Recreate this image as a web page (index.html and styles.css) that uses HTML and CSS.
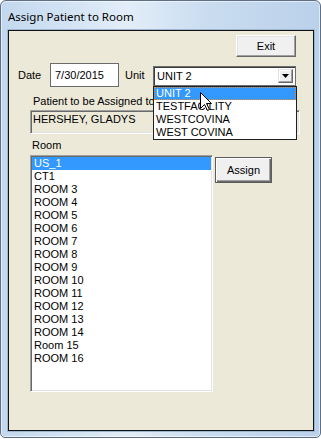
FILE: index.html
```html
<!DOCTYPE html>
<html>
<head>
<meta charset="utf-8">
<link rel="stylesheet" href="styles.css">
</head>
<body>
<div class="window">
  <div class="titlebar">Assign Patient to Room</div>
  <div class="client">
    <div class="toprow"><div class="btn exit">Exit</div></div>
    <div class="daterow">
      <span class="lbl date-lbl">Date</span>
      <div class="datebox">7/30/2015</div>
      <span class="lbl unit-lbl">Unit</span>
      <div class="combo">
        <span class="combo-text">UNIT 2</span>
        <span class="combo-btn"><svg width="7" height="4" viewBox="0 0 7 4"><path d="M0 0H7L3.5 4Z" fill="#000"/></svg></span>
        <ul class="droplist">
          <li class="sel">UNIT 2</li>
          <li>TESTFACILITY</li>
          <li>WESTCOVINA</li>
          <li>WEST COVINA</li>
        </ul>
        <svg class="cursor" width="13" height="20" viewBox="0 0 13 20"><path d="M0.5 0.5V16.5L4.5 12.5L7.5 18.5L9.5 17.5L6.5 11.5H11.5Z" fill="#fff" stroke="#000" stroke-width="1" stroke-linejoin="miter"/></svg>
      </div>
    </div>
    <div class="group">
      <div class="lbl patient-lbl">Patient to be Assigned to</div>
      <div class="readonly">HERSHEY, GLADYS</div>
      <div class="lbl room-lbl">Room</div>
      <div class="roomrow">
        <ul class="listbox">
          <li class="sel">US_1</li>
          <li>CT1</li>
          <li>ROOM 3</li>
          <li>ROOM 4</li>
          <li>ROOM 5</li>
          <li>ROOM 6</li>
          <li>ROOM 7</li>
          <li>ROOM 8</li>
          <li>ROOM 9</li>
          <li>ROOM 10</li>
          <li>ROOM 11</li>
          <li>ROOM 12</li>
          <li>ROOM 13</li>
          <li>ROOM 14</li>
          <li>Room 15</li>
          <li>ROOM 16</li>
        </ul>
        <div class="btn assign">Assign</div>
      </div>
    </div>
  </div>
</div>
</body>
</html>
```
FILE: styles.css
```css
* { box-sizing: border-box; }
html, body { margin: 0; padding: 0; background: #fff; }
body { font-family: "Liberation Sans", Arial, sans-serif; font-size: 11px; color: #000; }

.window {
  width: 321px;
  height: 438px;
  border: 1px solid #5e6f86;
  border-radius: 6px 6px 5px 5px;
  padding: 0 6px 6px 7px;
  background: linear-gradient(to right, #c3d8ee 0%, #d6e5f5 25%, #e2edf8 40%, #c9dcf0 65%, #bad1ea 100%);
  box-shadow: inset 0 0 0 1px rgba(255,255,255,0.55);
}
.titlebar {
  height: 29px;
  display: flex;
  align-items: center;
  font-family: "Noto Sans", "Open Sans", sans-serif;
  font-size: 11.5px;
  color: #000;
  padding-top: 1px;
}
.client {
  height: 401px;
  border: 1px solid #111;
  background: #ece9d8;
  box-shadow: 0 0 0 1px #9db6d2;
  padding: 4px 17px 0 9px;
}
.toprow { display: flex; justify-content: flex-end; }
.btn {
  display: flex;
  align-items: center;
  justify-content: center;
  background: #f0f0f0;
  font-size: 11px;
}
.exit {
  width: 60px;
  height: 22px;
  border: 1px solid;
  border-color: #fff #696969 #696969 #fff;
  box-shadow: inset -1px -1px 0 #a0a0a0, inset 1px 1px 0 #e3e3e3;
}
.daterow {
  display: flex;
  align-items: center;
  height: 24px;
  margin-top: 6px;
}
.lbl { line-height: 13px; white-space: nowrap; }
.date-lbl { width: 32px; }
.datebox {
  width: 69px;
  height: 24px;
  border: 1px solid #6b6b6b;
  background: #fff;
  padding-left: 4px;
  line-height: 22px;
}
.unit-lbl { width: 28px; margin-left: 6px; }
.combo {
  position: relative;
  align-self: flex-start;
  margin-top: 3px;
  width: 143px;
  height: 20px;
  border: 1px solid #6e6e6e;
  box-shadow: inset 1px 1px 0 #3c3c3c;
  background: #fff;
  display: flex;
  align-items: center;
  justify-content: space-between;
  padding: 0 2px 0 3px;
}
.combo-text { line-height: 13px; }
.combo-btn {
  width: 15px;
  height: 14px;
  background: #f0f0f0;
  border: 1px solid;
  border-color: #e3e3e3 #696969 #696969 #e3e3e3;
  box-shadow: inset -1px -1px 0 #a0a0a0, inset 1px 1px 0 #fff;
  display: flex;
  align-items: center;
  justify-content: center;
}
.combo-btn svg { display: block; }
.droplist {
  position: absolute;
  top: 19px;
  left: -1px;
  width: 144px;
  margin: 0;
  padding: 0;
  list-style: none;
  background: #fff;
  border: 1px solid #202020;
  z-index: 2;
}
.droplist li {
  height: 13px;
  line-height: 13px;
  padding-left: 2px;
}
.droplist li.sel {
  background: #3399ff;
  color: #fff;
  outline: 1px dotted #e08a3c;
  outline-offset: -1px;
}
.cursor {
  position: absolute;
  left: 46px;
  top: 25px;
  z-index: 3;
}
.group { margin-left: 12px; }
.patient-lbl { margin-top: 8px; padding-left: 3px; }
.readonly {
  margin-top: 2px;
  width: 270px;
  height: 24px;
  border: 1px solid;
  border-color: #a0a0a0 #fff #fff #a0a0a0;
  box-shadow: inset 1px 1px 0 #696969, inset -1px -1px 0 #e3e3e3;
  padding: 2px 0 0 2px;
  line-height: 13px;
}
.room-lbl { margin-top: 5px; padding-left: 2px; }
.roomrow { display: flex; align-items: flex-start; margin-top: 3px; }
.listbox {
  width: 183px;
  height: 237px;
  margin: 0;
  padding: 0;
  list-style: none;
  background: #fff;
  border: 1px solid;
  border-color: #a0a0a0 #fff #fff #a0a0a0;
  box-shadow: inset 1px 1px 0 #696969, inset -1px -1px 0 #e3e3e3;
  padding: 1px 1px 0 1px;
}
.listbox li {
  height: 13px;
  line-height: 13px;
  padding-left: 2px;
}
.listbox li.sel { background: #3399ff; color: #fff; }
.assign {
  width: 57px;
  height: 26px;
  margin: 2px 0 0 2px;
  border: 1px solid #5c5c5c;
  box-shadow: inset 1px 1px 0 #fff, inset -1px -1px 0 #696969, inset -2px -2px 0 #a0a0a0;
}
```
